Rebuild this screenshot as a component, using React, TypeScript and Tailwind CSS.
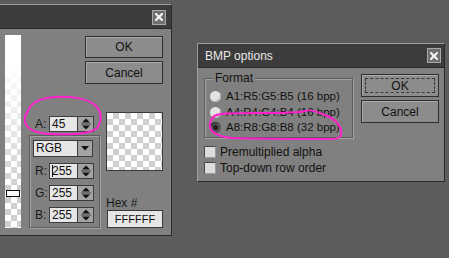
import React from 'react';

const checker =
  'bg-[repeating-conic-gradient(#cfcfcf_0_25%,#ffffff_0_50%)] bg-[length:12px_12px]';

function CloseButton() {
  return (
    <div className="w-[14px] h-[15px] border border-[#a9a9a9] bg-[#6f6f6f] flex items-center justify-center">
      <svg width="8" height="8" viewBox="0 0 8 8">
        <path d="M1 1 L7 7 M7 1 L1 7" stroke="#f4f4f4" strokeWidth="2.2" strokeLinecap="square" />
      </svg>
    </div>
  );
}

function Button({ label, focused, className }: { label: string; focused?: boolean; className?: string }) {
  return (
    <div
      className={`relative w-[78px] flex items-center justify-center border border-[#2e2e2e] bg-[#8c8c8c] shadow-[inset_1px_1px_0_#ababab] text-[12px] text-[#111] ${className ?? ''}`}
    >
      {focused && <div className="absolute inset-[3px] border border-dashed border-[#3a3a3a]" />}
      <span className="relative">{label}</span>
    </div>
  );
}

function Spinner() {
  return (
    <div className="w-[16px] h-[16px] bg-[#a3a3a3] border border-l-0 border-[#3c3c3c] flex items-center justify-center">
      <svg width="14" height="14" viewBox="0 0 14 14">
        <path d="M3 5.5 L7 1.5 L11 5.5 Z" fill="#111" />
        <path d="M2 7 H12" stroke="#3c3c3c" strokeWidth="1" />
        <path d="M3 8.5 L11 8.5 L7 12.5 Z" fill="#111" />
      </svg>
    </div>
  );
}

function NumberField({ label, value, caret }: { label: string; value: string; caret?: boolean }) {
  return (
    <div className="flex items-center h-[17px]">
      <span className="w-[14px] text-[12px] text-[#1a1a1a]">{label}</span>
      <div className="w-[29px] h-[16px] bg-[#e6e6e6] border border-[#3c3c3c] flex items-center pl-[2px] text-[12px] leading-none text-[#111]">
        {caret && <span className="w-px h-[12px] bg-[#111] -mr-px" />}
        {value}
      </div>
      <Spinner />
    </div>
  );
}

function Radio({ checked, label }: { checked?: boolean; label: string }) {
  return (
    <div className="flex items-center h-[15.5px] pl-[5px]">
      <div
        className={`w-[11px] h-[11px] rounded-full flex items-center justify-center ${
          checked ? 'bg-[#575757] shadow-[inset_1px_1px_1px_#2a2a2a]' : 'bg-[#e4e4e4] shadow-[inset_-1px_-1px_1px_#b0b0b0]'
        }`}
      >
        {checked && <div className="w-[5px] h-[5px] rounded-full bg-[#1d1d1d]" />}
      </div>
      <span className="ml-[5px] text-[11.5px] text-[#111]">{label}</span>
    </div>
  );
}

function Checkbox({ label }: { label: string }) {
  return (
    <div className="flex items-center h-[16px]">
      <div className="w-[12px] h-[12px] bg-[#dcdcdc] border border-[#4a4a4a] border-r-[#9a9a9a] border-b-[#9a9a9a]" />
      <span className="ml-[4px] text-[12px] text-[#111]">{label}</span>
    </div>
  );
}

export default function App() {
  return (
    <div className="relative w-[449px] h-[258px] overflow-hidden bg-[#5c5c5c] font-['Liberation_Sans',Arial,sans-serif] text-[11px]">
      <div className="flex items-start">
        {/* colour picker dialog, cut off on the left */}
        <div className="-ml-2 mt-1 w-[180px] h-[232px] flex flex-col border border-[#2a2a2a] border-t-[#9c9c9c] bg-[#808080]">
          <div className="h-[24px] shrink-0 bg-[#3c3c3c] border-b border-[#2a2a2a] flex items-center justify-end pr-[5px] pt-[1px]">
            <CloseButton />
          </div>
          <div className="flex">
            <div className={`relative ml-[12px] mt-[6px] w-[16px] h-[193px] ${checker}`}>
              <div className="h-full bg-linear-to-b from-white from-15% to-transparent to-80%" />
              <div className="absolute left-[1px] top-[155px] w-[14px] h-[7px] bg-white border border-[#111]" />
            </div>
            <div className="ml-[8px] mt-[7px] w-[134px] flex flex-col">
              <Button label="OK" className="ml-auto h-[22px]" />
              <Button label="Cancel" className="ml-auto mt-[3px] h-[23px]" />
              <div className="flex mt-[28px]">
                <div className="w-[71px] flex flex-col">
                  <div className="mt-[3px] pl-[6px]">
                    <NumberField label="A:" value="45" />
                  </div>
                  <div className="mt-[3px] h-[93px] border border-[#5c5c5c] shadow-[inset_1px_1px_0_#a2a2a2,1px_1px_0_#a2a2a2] pl-[3px] pt-[4px] flex flex-col">
                    <div className="w-[60px] h-[17px] flex border border-[#3c3c3c] bg-[#e6e6e6]">
                      <span className="flex-1 pl-[2px] text-[12px] leading-[15px] text-[#111]">RGB</span>
                      <div className="w-[15px] bg-[#a3a3a3] border-l border-[#3c3c3c] flex items-center justify-center">
                        <svg width="8" height="5" viewBox="0 0 8 5">
                          <path d="M0 0 H8 L4 4.5 Z" fill="#111" />
                        </svg>
                      </div>
                    </div>
                    <div className="pl-[2px] mt-[5px] flex flex-col gap-[5px]">
                      <NumberField label="R:" value="255" caret />
                      <NumberField label="G:" value="255" />
                      <NumberField label="B:" value="255" />
                    </div>
                  </div>
                </div>
                <div className="ml-[6px] w-[57px] flex flex-col">
                  <div className={`h-[59px] border border-[#3a3a3a] ${checker}`} />
                  <span className="mt-[26px] text-[12px] leading-[12px] text-[#1a1a1a]">Hex #</span>
                  <div className="ml-[1px] mt-[1px] h-[18px] w-[56px] bg-[#e6e6e6] border border-[#3a3a3a] flex items-center justify-center text-[11px] text-[#111]">
                    FFFFFF
                  </div>
                </div>
              </div>
            </div>
          </div>
        </div>

        {/* BMP options dialog */}
        <div className="ml-[25px] mt-[43px] w-[248px] h-[139px] flex flex-col border border-[#2a2a2a] border-t-[#9c9c9c] border-l-[#9c9c9c] bg-[#808080]">
          <div className="h-[24px] shrink-0 bg-[#3c3c3c] border-b border-[#2a2a2a] flex items-center justify-between pl-[7px] pr-[3px]">
            <span className="text-[12px] text-[#e8e8e8]">BMP options</span>
            <CloseButton />
          </div>
          <div className="flex">
            <div className="ml-[6px] w-[149px] flex flex-col">
              <div className="relative mt-[10px] h-[60px] border border-[#5c5c5c] shadow-[inset_1px_1px_0_#a2a2a2,1px_1px_0_#a2a2a2] pt-[10px]">
                <span className="absolute left-[8px] -top-[7px] px-[2px] bg-[#808080] text-[12px] leading-[12px] text-[#111]">
                  Format
                </span>
                <Radio label="A1:R5:G5:B5 (16 bpp)" />
                <Radio label="A4:R4:G4:B4 (16 bpp)" />
                <Radio checked label="A8:R8:G8:B8 (32 bpp)" />
              </div>
              <div className="mt-[6px] flex flex-col">
                <Checkbox label="Premultiplied alpha" />
                <Checkbox label="Top-down row order" />
              </div>
            </div>
            <div className="ml-[8px] mt-[6px] flex flex-col">
              <Button label="OK" focused className="h-[23px]" />
              <Button label="Cancel" className="mt-[3px] h-[23px]" />
            </div>
          </div>
        </div>
      </div>

      {/* hand-drawn highlight marks */}
      <svg className="absolute inset-0 pointer-events-none" width="449" height="258" viewBox="0 0 449 258">
        <path
          d="M27 113 C30 103 40 98 55 97 C70 96 88 98 96 106 C102 112 102 122 97 128 C90 134 70 135 50 134 C36 133 27 130 25 122 C24 118 25 115 28 111"
          fill="none"
          stroke="#ff22cc"
          strokeWidth="2"
          strokeLinecap="round"
        />
        <path
          d="M213 117 C216 113 230 113 260 113 C285 113 300 113 305 111 C310 109 316 111 325 115 C335 119 340 124 341 131 C342 137 339 139 330 139 C300 139 260 139 232 138 C220 137 211 133 210 127 C209 122 211 119 215 116"
          fill="none"
          stroke="#ff22cc"
          strokeWidth="2"
          strokeLinecap="round"
        />
      </svg>
    </div>
  );
}
